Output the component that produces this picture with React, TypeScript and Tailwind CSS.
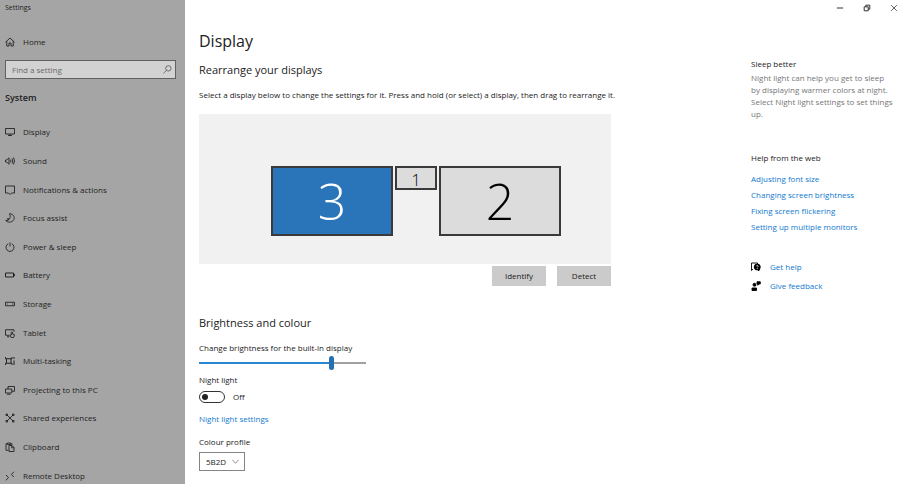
import { useState } from 'react'
import type { ReactNode } from 'react'

interface IconProps {
  children: ReactNode
  className?: string
}

function Icon({ children, className = 'w-[10px] h-[10px]' }: IconProps) {
  return (
    <svg
      viewBox="0 0 20 20"
      fill="none"
      stroke="currentColor"
      strokeWidth="1.8"
      aria-hidden="true"
      className={`shrink-0 ${className}`}
    >
      {children}
    </svg>
  )
}

const navItems = [
  { label: 'Display', icon: <path d="M1 3h18v11H1zM6 17h8M10 14v3" /> },
  {
    label: 'Sound',
    icon: <path d="M1 8v4h2.500l4.500 4.500V3.500L3.500 8zM11 7.500q1.500 2.500 0 5M14 5q3 5 0 10M17 3q4 7 0 14" />
  },
  { label: 'Notifications & actions', icon: <path d="M1 2h18v14h-6l-3 3-3-3H1z" /> },
  { label: 'Focus assist', icon: <path d="M9 1.500c9 0 12 9 7 14-4 4-11 3.500-14.500-.5C8 15.500 13 10 9 1.500zM4 11.500l4 0-4 4" /> },
  { label: 'Power & sleep', icon: <path d="M10 1v8M6.500 3.500a8 8 0 1 0 7 0" /> },
  { label: 'Battery', icon: <path d="M1 6h16v8H1zM17 8.500h2v3h-2" strokeWidth="2" /> },
  { label: 'Storage', icon: <path d="M1 6.500h18v7H1zM4 10h1.500M14 10h2.500" /> },
  {
    label: 'Tablet',
    icon: <path d="M9 14.500H1v-11h17v4M4 17.500h5M12.500 14V8.500q1.200-1.500 2.400 0V12l3.600 1v3l-1.500 3h-4.500L10 15z" />
  },
  { label: 'Multi-tasking', icon: <path d="M3 5.500h9v9H3zM1 2v3.500h2M14 2v3.500h-2M1 18v-3.500h2M14 18v-3.500h-2M18 2v4M18 9v9" strokeWidth="2" /> },
  { label: 'Projecting to this PC', icon: <path d="M6 8V3h13v9.500h-5M1 8h12.500v8H1zM4 18.500h7" /> },
  {
    label: 'Shared experiences',
    icon: (
      <>
        <path d="M4 4l12 12M16 4L4 16" />
        <path d="M2 2h3v3H2zM15 2h3v3h-3zM2 15h3v3H2zM15 15h3v3h-3z" />
      </>
    )
  },
  { label: 'Clipboard', icon: <path d="M7 16.500H2V3.500h3M11 3.500h3v3M5 2h6v3H5zM8 7h6l4 4v8H8zM13.500 7v4.500H18" /> },
  { label: 'Remote Desktop', icon: <path d="M2 8l5 5-5 5.500M18 1.500L12.500 7l5.500 5" /> }
]

const helpLinks = [
  'Adjusting font size',
  'Changing screen brightness',
  'Fixing screen flickering',
  'Setting up multiple monitors'
]

const linkClass = 'text-[#0f79d0] hover:underline'

function Sidebar() {
  return (
    <aside className="flex w-[185px] shrink-0 flex-col overflow-hidden bg-[#a5a5a5]">
      <p className="h-[15px] pl-[5px] text-[7px] leading-[15px]">Settings</p>
      <a href="#home" className="mt-[21px] flex h-4 items-center gap-2 pl-[5px]">
        <Icon>
          <path d="M1 10.500L10 2l9 8.500M3.500 8.500V18H8v-6h4v6h4.500V8.500" />
        </Icon>
        Home
      </a>
      <div className="relative mx-[5px] mt-3 mr-[9px]">
        <input
          type="text"
          aria-label="Find a setting"
          placeholder="Find a setting"
          className="block h-[19px] w-full border border-[#606060] bg-[#d2d2d2] pl-[6px] pr-5 outline-none placeholder:text-[#686868]"
        />
        <Icon className="absolute right-1 top-[5px] h-[9px] w-[9px] text-[#555]">
          <circle cx="12" cy="7.500" r="6" />
          <path d="M7.500 12L1 18.500" />
        </Icon>
      </div>
      <h2 className="mt-[11px] pl-[5px] text-[9px] font-semibold leading-4">System</h2>
      <nav className="mt-3 grid min-h-[372px] shrink-0 auto-rows-fr">
        {navItems.map((item) => (
          <a key={item.label} href="#section" className="flex items-center gap-2 pl-[5px] hover:bg-[#959595]">
            <Icon>{item.icon}</Icon>
            {item.label}
          </a>
        ))}
      </nav>
    </aside>
  )
}

function WindowControls() {
  return (
    <header className="flex h-[15px] shrink-0 items-center justify-end gap-[19px] pr-[9px] text-[#333]">
      <button type="button" aria-label="Minimise">
        <Icon className="h-2 w-2"><path d="M2 10h16" strokeWidth="2.500" /></Icon>
      </button>
      <button type="button" aria-label="Restore">
        <Icon className="h-2 w-2"><path d="M3 7h10v10H3zM7 7V3h10v10h-4" strokeWidth="2.500" /></Icon>
      </button>
      <button type="button" aria-label="Close">
        <Icon className="h-2 w-2"><path d="M3 3l14 14M17 3L3 17" strokeWidth="2" /></Icon>
      </button>
    </header>
  )
}

function Arrangement() {
  return (
    <>
      <div className="mt-[13px] flex h-[150px] items-start justify-center gap-[2px] bg-[#f1f1f1] pt-[52px] pl-[22px]">
        <button type="button" className="h-[70px] w-[122px] border-2 border-[#3a3a3a] bg-[#2a74ba] text-[50px] font-light leading-[64px] text-white">
          3
        </button>
        <button type="button" className="h-6 w-[42px] border-2 border-[#3a3a3a] bg-[#dcdcdc] text-[16px] font-light leading-6 text-black">
          1
        </button>
        <button type="button" className="h-[70px] w-[122px] border-2 border-[#3a3a3a] bg-[#dcdcdc] text-[50px] font-light leading-[64px] text-black">
          2
        </button>
      </div>
      <div className="mt-[2px] flex justify-end gap-[11px]">
        <button type="button" className="h-5 w-[54px] bg-[#cbcbcb]">Identify</button>
        <button type="button" className="h-5 w-[54px] bg-[#cbcbcb]">Detect</button>
      </div>
    </>
  )
}

function Brightness() {
  const [brightness, setBrightness] = useState(80)
  const [nightLight, setNightLight] = useState(false)

  return (
    <section className="mt-[29px]">
      <h2 className="text-[11px] leading-4">Brightness and colour</h2>
      <label htmlFor="brightness" className="mt-[11px] block leading-3">
        Change brightness for the built-in display
      </label>
      <input
        id="brightness"
        type="range"
        value={brightness}
        onChange={(e) => setBrightness(Number(e.target.value))}
        style={{ backgroundImage: `linear-gradient(to right, #2a86d1 ${brightness}%, #a0a0a0 ${brightness}%)` }}
        className="mt-[1px] block h-4 w-[167px] appearance-none bg-[length:100%_2px] bg-center bg-no-repeat [&::-webkit-slider-thumb]:h-[14px] [&::-webkit-slider-thumb]:w-[5px] [&::-webkit-slider-thumb]:appearance-none [&::-webkit-slider-thumb]:rounded-full [&::-webkit-slider-thumb]:bg-[#2470b5]"
      />
      <label htmlFor="night-light" className="mt-[3px] block leading-3">Night light</label>
      <div className="mt-[5px] flex h-3 items-center gap-2">
        <input
          id="night-light"
          type="checkbox"
          role="switch"
          checked={nightLight}
          onChange={(e) => setNightLight(e.target.checked)}
          className="flex h-3 w-[26px] appearance-none items-center rounded-full border border-[#333] px-[2px] before:h-[6px] before:w-[6px] before:rounded-full before:bg-[#222] checked:justify-end checked:bg-[#2a86d1]"
        />
        <span>{nightLight ? 'On' : 'Off'}</span>
      </div>
      <a href="#night-light-settings" className={`mt-[10px] block leading-3 ${linkClass}`}>Night light settings</a>
      <label htmlFor="profile" className="mt-[11px] block leading-3">Colour profile</label>
      <div className="relative mt-1 w-[46px]">
        <select id="profile" className="block h-[19px] w-full appearance-none border border-[#858585] bg-white pl-[6px]">
          <option>5B2D</option>
        </select>
        <Icon className="pointer-events-none absolute right-[6px] top-[6px] h-[7px] w-[7px] text-[#555]">
          <path d="M1 5l9 10 9-10" />
        </Icon>
      </div>
    </section>
  )
}

function HelpPanel() {
  return (
    <aside className="ml-auto w-[142px] shrink-0 pt-[41px]">
      <h3 className="font-medium leading-4">Sleep better</h3>
      <p className="leading-3 text-[#767676]">
        Night light can help you get to sleep by displaying warmer colors at night. Select Night light settings to set things up.
      </p>
      <h3 className="mt-[30px] font-medium leading-4">Help from the web</h3>
      <ul className="mt-[5px]">
        {helpLinks.map((link) => (
          <li key={link} className="h-4 leading-4">
            <a href="#help" className={linkClass}>{link}</a>
          </li>
        ))}
      </ul>
      <a href="#get-help" className={`mt-6 flex h-4 items-center gap-[9px] ${linkClass}`}>
        <Icon className="h-[10px] w-[10px] text-black">
          <path d="M4 14L1 17V2h12v3" />
          <circle cx="12.500" cy="10" r="6" fill="currentColor" />
          <path d="M15 14v4l3-4z" fill="currentColor" />
          <path d="M10.500 8q2-2.500 4 0 0 1-2 2.500M12.500 12v2" stroke="white" strokeWidth="1.500" />
        </Icon>
        Get help
      </a>
      <a href="#feedback" className={`mt-[3px] flex h-4 items-center gap-[9px] ${linkClass}`}>
        <Icon className="h-[10px] w-[10px] text-black">
          <circle cx="7" cy="7.500" r="3" fill="currentColor" />
          <path d="M2 19v-5h9v5zM12 1.500h6.500v4.500H16L13.500 8.500V6H12z" fill="currentColor" />
        </Icon>
        Give feedback
      </a>
    </aside>
  )
}

export default function App() {
  return (
    <div className="flex h-screen overflow-hidden bg-white font-['Open_Sans','Noto_Sans',sans-serif] text-[8px] leading-3 text-[#222]">
      <Sidebar />
      <div className="flex min-w-0 flex-1 flex-col">
        <WindowControls />
        <div className="flex pr-[14px] pl-[14px]">
          <main className="min-w-0 max-w-[412px] flex-1 pt-[14px]">
            <h1 className="text-[16px] leading-6">Display</h1>
            <h2 className="mt-[9px] text-[11px] leading-4">Rearrange your displays</h2>
            <p className="mt-[11px] whitespace-nowrap leading-3">
              Select a display below to change the settings for it. Press and hold (or select) a display, then drag to rearrange it.
            </p>
            <Arrangement />
            <Brightness />
          </main>
          <HelpPanel />
        </div>
      </div>
    </div>
  )
}
